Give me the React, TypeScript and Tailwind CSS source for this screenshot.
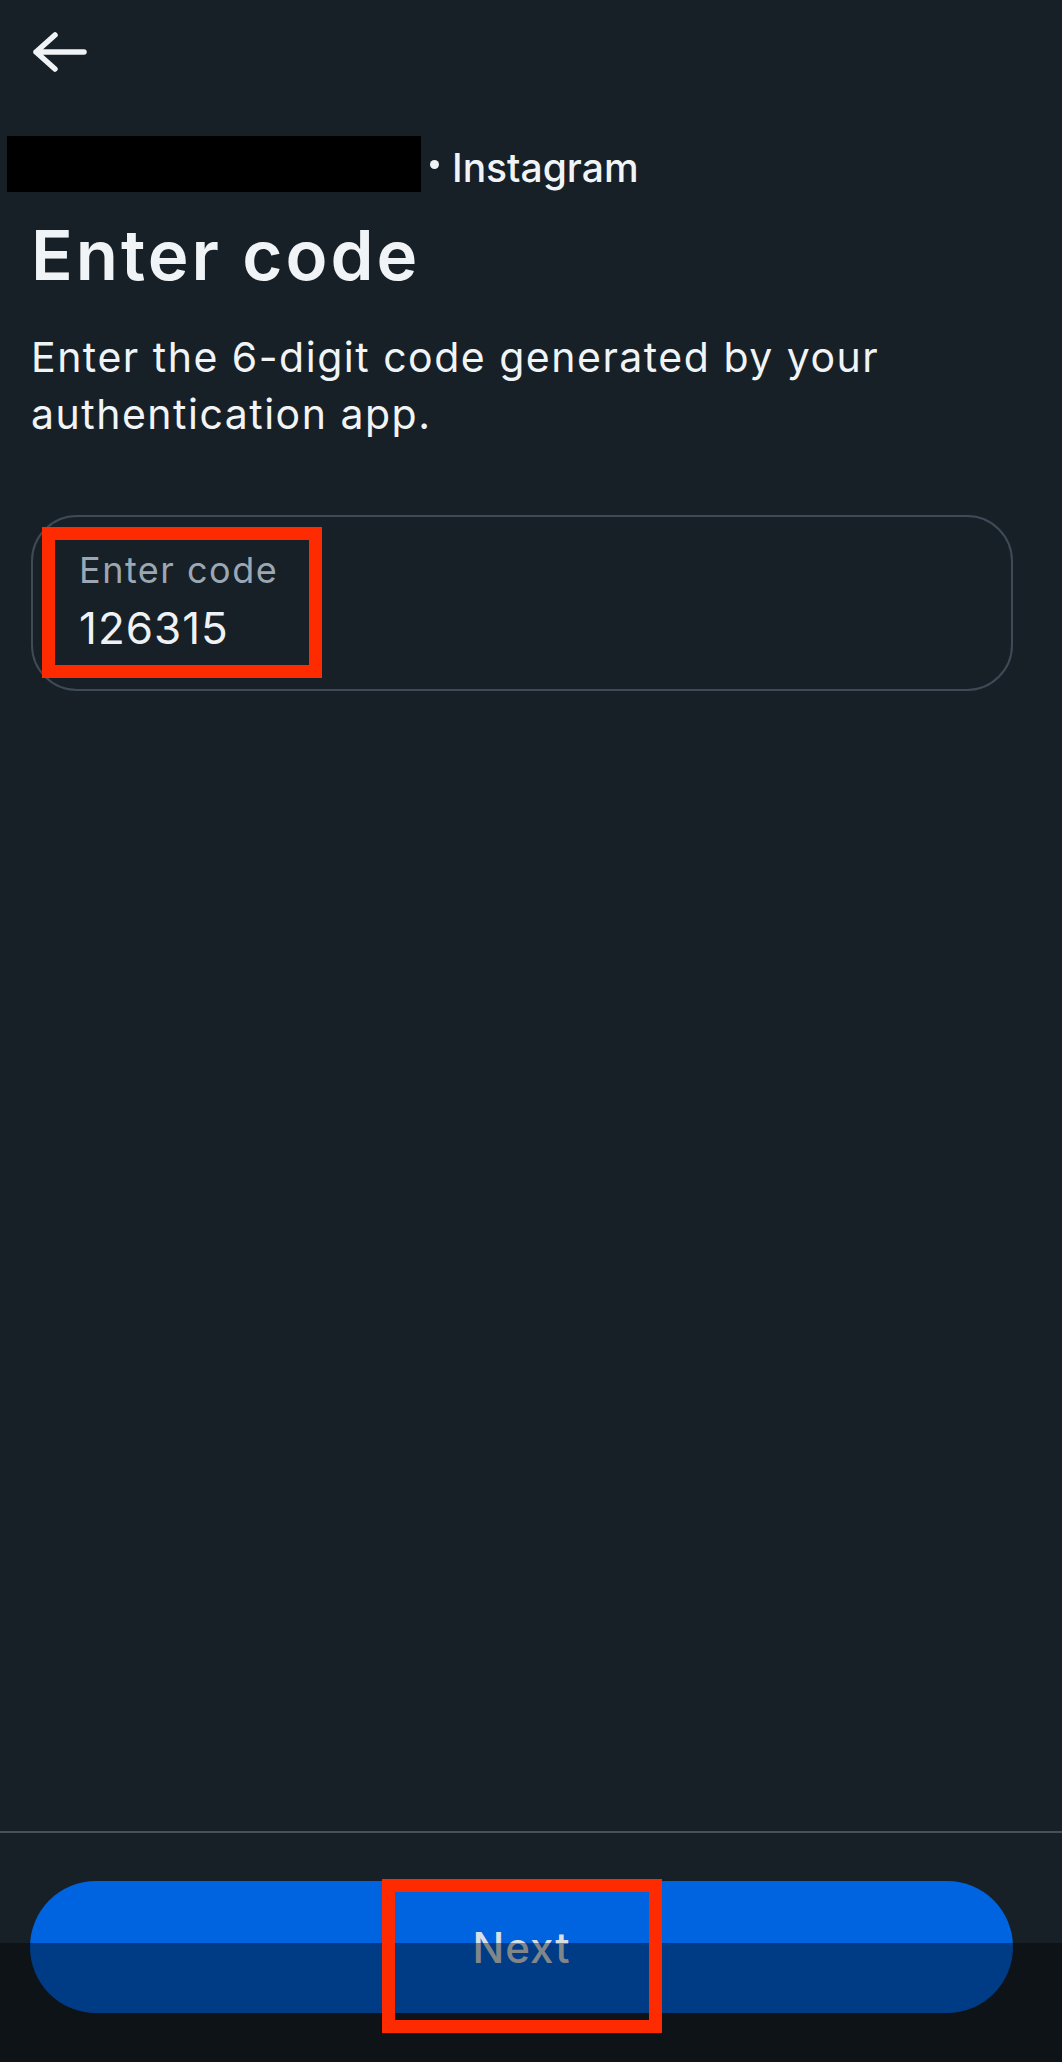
import React from "react";

function BackArrow() {
  return (
    <svg width="60" height="50" viewBox="0 0 60 50" fill="none" className="block">
      <path
        d="M6 25H54M25 8L6 25L25 42"
        stroke="#f0f3f6"
        strokeWidth="5.5"
        strokeLinecap="round"
        strokeLinejoin="round"
      />
    </svg>
  );
}

export default function App() {
  return (
    <div
      className="relative flex h-[2062px] w-[1062px] flex-col overflow-hidden bg-[#172027] text-[#f1f4f7]"
      style={{ fontFamily: "Inter, 'Noto Sans', sans-serif" }}
    >
      <main className="flex-1">
        <header className="pl-[30px] pt-[27px]">
          <button type="button" aria-label="Back" className="block">
            <BackArrow />
          </button>
        </header>

        <div className="mt-[59px] flex h-[56px] items-start">
          <div className="ml-[7px] h-[56px] w-[414px] bg-black" />
          <span className="ml-[9px] mt-[24px] h-[9px] w-[9px] rounded-full bg-[#eef2f5]" />
          <span className="ml-[13px] pt-[4px] text-[39px] font-medium leading-[56px]">Instagram</span>
        </div>

        <div className="pl-[31px] pr-[49px]">
          <h1 className="mt-[21px] text-[69px] font-semibold leading-[84px] tracking-[3px]">Enter code</h1>

          <p className="mt-[32px] max-w-[960px] text-[41px] leading-[57px] tracking-[1.5px]">
            Enter the 6-digit code generated by your authentication app.
          </p>

          <div className="mt-[72px] flex h-[176px] flex-col rounded-[46px] border-2 border-[#3e4a55] pl-[46px] pt-[33px]">
            <label className="text-[36px] leading-[40px] tracking-[1.5px] text-[#9ba8b4]">Enter code</label>
            <div className="mt-[13px] text-[44px] leading-[50px] tracking-[1px] text-[#eef2f5]">126315</div>
          </div>
        </div>
      </main>

      <footer className="border-t-2 border-[#46515b] pb-[49px] pl-[30px] pr-[49px] pt-[48px]">
        <button
          type="button"
          className="flex h-[132px] w-full items-center justify-center rounded-full bg-[#0064e0] text-[42px] font-medium tracking-[1px] text-[#d8dfe5]"
        >
          Next
        </button>
      </footer>

      {/* system nav bar scrim */}
      <div className="pointer-events-none absolute inset-x-0 bottom-0 h-[119px] bg-black/40" />

      {/* annotation boxes */}
      <div className="pointer-events-none absolute left-[42px] top-[527px] h-[151px] w-[280px] border-[13px] border-[#ff2b00]" />
      <div className="pointer-events-none absolute left-[382px] top-[1879px] h-[154px] w-[280px] border-[13px] border-[#ff2b00]" />
    </div>
  );
}
